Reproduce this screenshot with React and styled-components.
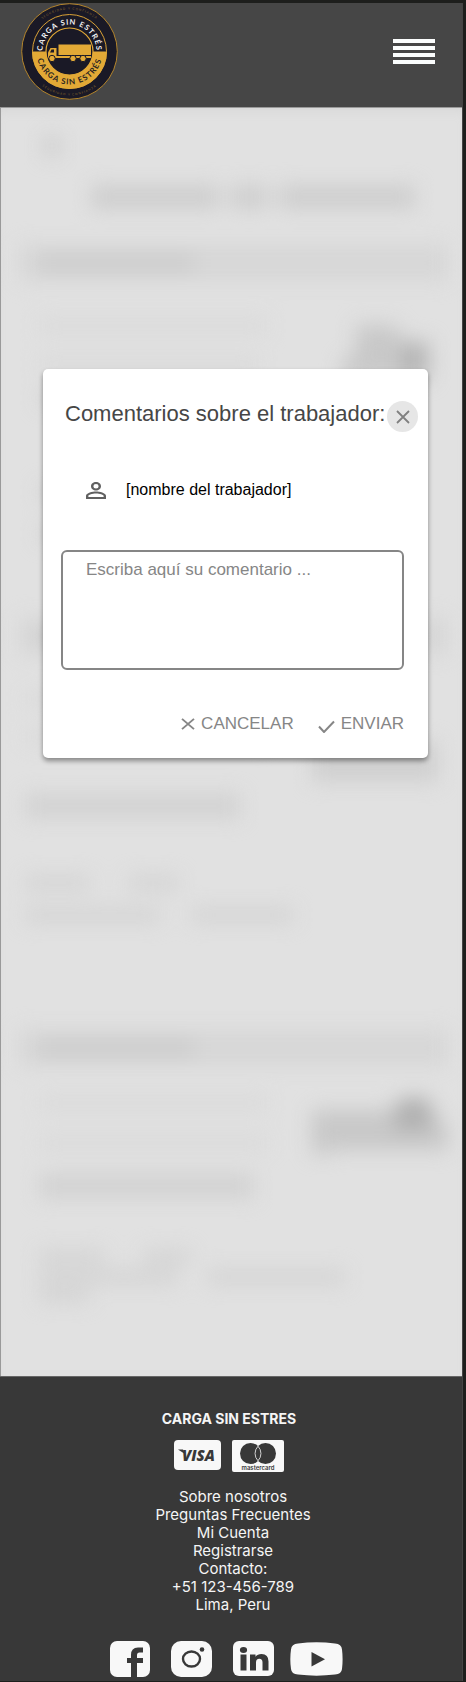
import React from "react";
import styled, { createGlobalStyle } from "styled-components";

const GlobalStyle = createGlobalStyle`
  *, *::before, *::after { box-sizing: border-box; }
  body {
    margin: 0;
    background: #1d1e1c;
    font-family: "Liberation Sans", Arial, sans-serif;
  }
  h1, h2, p, ul { margin: 0; padding: 0; }
  button {
    margin: 0;
    padding: 0;
    border: 0;
    background: none;
    font: inherit;
    cursor: pointer;
  }
  svg { display: block; flex: none; }
`;

const Page = styled.div`
  margin: 3px 3px 1px 0;
  border-right: 1px solid #444;
`;

/* ---------- header ---------- */

const Header = styled.header`
  display: flex;
  align-items: center;
  justify-content: space-between;
  padding: 0 27px 7px 21px;
  background: #464646;
  border-bottom: 1px solid #9a9a9a;
`;

const MenuButton = styled.button`
  display: flex;
  flex-direction: column;
  gap: 3px;
`;

const MenuBar = styled.span`
  width: 42px;
  height: 4px;
  background: #fbfdfd;
`;

function Logo() {
  return (
    <svg width="97" height="97" viewBox="-48.5 -48.5 97 97" role="img" aria-label="Carga sin estrés">
      <defs>
        <path id="arcTop" d="M-27 0A27 27 0 0 1 27 0" />
        <path id="arcBottom" d="M-33 0A33 33 0 0 0 33 0" />
        <path id="rimTop" d="M-42 0A42 42 0 0 1 42 0" />
        <path id="rimBottom" d="M-44 0A44 44 0 0 0 44 0" />
      </defs>
      <circle r="47.800" fill="#1a1926" stroke="#b5862c" strokeWidth="1" />
      <circle r="37" fill="#1a1926" stroke="#d9a136" strokeWidth="1" />
      <path d="M-37.500 0A37.500 37.500 0 0 0 37.500 0Z" fill="#e2a936" />
      <circle r="23.500" fill="#1a1926" stroke="#e2a936" strokeWidth="1.200" />
      <g fontFamily="Lato, sans-serif" textAnchor="middle">
        <text fontSize="7.500" fontWeight="700" fill="#f2f2f4" letterSpacing="1">
          <textPath href="#arcTop" startOffset="50%">CARGA SIN ESTRÉS</textPath>
        </text>
        <text fontSize="8" fontWeight="700" fill="#2a2522" letterSpacing="1">
          <textPath href="#arcBottom" startOffset="50%">CARGA SIN ESTRÉS</textPath>
        </text>
        <text fontSize="3" fill="#8a682c" letterSpacing="1">
          <textPath href="#rimTop" startOffset="50%">SEGURIDAD Y CONFIANZA</textPath>
        </text>
        <text fontSize="3" fill="#8a682c" letterSpacing="1">
          <textPath href="#rimBottom" startOffset="50%">SEGURIDAD Y CONFIANZA</textPath>
        </text>
      </g>
      <g fill="#e2a936">
        <rect x="-11" y="-7" width="32.500" height="10.500" />
        <path d="M-13 -3.500V6H-21.500V1L-19 -3.500Z" />
        <rect x="-21.500" y="4.500" width="43" height="2" />
        <g stroke="#1a1926" strokeWidth="1">
          <circle cx="-17.500" cy="7" r="3.200" />
          <circle cx="3.500" cy="7" r="3.200" />
          <circle cx="13.500" cy="7" r="3.200" />
        </g>
      </g>
      <path d="M-19.500 1L-18 -2H-15.500V1Z" fill="#1a1926" />
    </svg>
  );
}

/* ---------- blurred history list behind the dialog ---------- */

const Main = styled.main`
  display: grid;
  overflow: hidden;
  background: #e1e1e1;
  border-left: 1px solid #999;
  box-shadow: inset 0 8px 12px -6px #d6d6d6;
`;

const Backdrop = styled.div`
  grid-area: 1 / 1;
  display: flex;
  flex-direction: column;
  padding: 28px 14px 74px 18px;
  filter: blur(10px);
`;

const BackMark = styled.span`
  width: 14px;
  height: 20px;
  margin-left: 26px;
  background: #cacaca;
`;

const Band = styled.div`
  display: flex;
  align-items: center;
  height: 36px;
  padding-left: 20px;
  background: #d7d7d7;
`;

const Body = styled.div`
  display: grid;
`;

const Lines = styled.div`
  grid-area: 1 / 1;
  display: flex;
  flex-direction: column;
  padding-left: ${(p) => p.$inset}px;
`;

const Line = styled.div`
  display: flex;
  gap: ${(p) => p.$gap || 12}px;
  margin-top: ${(p) => p.$top || 0}px;
`;

const Bar = styled.span`
  width: ${(p) => p.$w}px;
  height: ${(p) => p.$h || 14}px;
  background: ${(p) => p.$tone || "#d3d3d3"};
`;

const Thumb = styled.svg`
  grid-area: 1 / 1;
  justify-self: end;
  margin-top: ${(p) => p.$top}px;
`;

const FAINT = "#dadada";
const SOFT = "#d2d2d2";
const STRONG = "#c9c9c9";

function BlurredHistory() {
  return (
    <Backdrop aria-hidden="true">
      <BackMark />
      <Lines $inset={72}>
        <Line $top={30}>
          <Bar $w={128} $h={22} $tone="#cdcdcd" />
          <Bar $w={36} $h={22} $tone="#cdcdcd" />
          <Bar $w={136} $h={22} $tone="#cdcdcd" />
        </Line>
      </Lines>
      <Line $top={37} />
      <Band><Bar $w={155} $tone={STRONG} /></Band>
      <Body>
        <Lines $inset={20}>
          <Line $top={38}><Bar $w={228} $tone={FAINT} /></Line>
          <Line $top={24}><Bar $w={220} $tone={FAINT} /></Line>
          <Line $top={20}><Bar $w={220} $tone={SOFT} /></Line>
          <Line $top={80}><Bar $w={160} $tone={SOFT} /></Line>
          <Line $top={28}><Bar $w={200} $tone={SOFT} /></Line>
          <Line $top={77} />
        </Lines>
        <Thumb $top={42} width="116" height="56" viewBox="0 0 116 56">
          <path d="M24 2H62L72 18H98V56H10V40L24 28Z" fill="#c8c8c8" />
          <path d="M70 20H94V56H70Z" fill="#b4b4b4" />
        </Thumb>
      </Body>
      <Band><Bar $w={155} $tone={STRONG} /></Band>
      <Body>
        <Lines $inset={6}>
          <Line $top={38}><Bar $w={240} $tone={FAINT} /></Line>
          <Line $top={24}><Bar $w={240} $tone={FAINT} /></Line>
          <Line $top={50}><Bar $w={215} $h={24} $tone={SOFT} /></Line>
          <Line $top={58} $gap={38}><Bar $w={65} /><Bar $w={50} /></Line>
          <Line $top={18} $gap={32}><Bar $w={135} /><Bar $w={102} /></Line>
          <Line $top={108} />
        </Lines>
        <Thumb $top={84} width="140" height="48" viewBox="0 0 140 48">
          <path d="M4 4H130V44H4Z" fill="#d0d0d0" />
        </Thumb>
      </Body>
      <Band><Bar $w={155} $tone={STRONG} /></Band>
      <Body>
        <Lines $inset={20}>
          <Line $top={30}><Bar $w={228} $tone={FAINT} /></Line>
          <Line $top={26}><Bar $w={228} $tone={FAINT} /></Line>
          <Line $top={24}><Bar $w={215} $h={24} $tone={SOFT} /></Line>
          <Line $top={52} $gap={40}><Bar $w={65} /><Bar $w={46} /></Line>
          <Line $top={6} $gap={30}><Bar $w={138} /><Bar $w={138} /></Line>
          <Line $top={4}><Bar $w={50} /></Line>
        </Lines>
        <Thumb $top={30} width="140" height="60" viewBox="0 0 140 60">
          <path d="M4 14H80L92 4H122L130 22L140 32V54H22V58H4Z" fill="#c8c8c8" />
          <path d="M92 2H120L124 34H84Z" fill="#b0b0b0" />
        </Thumb>
      </Body>
    </Backdrop>
  );
}

/* ---------- dialog ---------- */

const Dialog = styled.section`
  grid-area: 1 / 1;
  align-self: start;
  z-index: 1;
  margin: 261px 34px 0 42px;
  padding: 32px 24px 23px 18px;
  background: #fff;
  border-radius: 5px;
  box-shadow: 0 3px 5px rgba(0, 0, 0, 0.4);
`;

const DialogHead = styled.div`
  display: flex;
  align-items: flex-start;
  justify-content: space-between;
  margin-right: -14px;
  padding-left: 4px;
`;

const Title = styled.h1`
  color: #464646;
  font-size: 22px;
  font-weight: 400;
  line-height: 26px;
  white-space: nowrap;
`;

const CloseButton = styled.button`
  display: grid;
  place-items: center;
  width: 31px;
  height: 31px;
  flex: none;
  border-radius: 50%;
  background: #e6e6e6;
  color: #808080;
`;

const Worker = styled.div`
  display: flex;
  align-items: center;
  gap: 20px;
  margin: 48px 0 50px;
  padding-left: 25px;
  color: #000;
  font-size: 16px;
  line-height: 20px;
`;

const Comment = styled.textarea`
  display: block;
  width: 100%;
  height: 120px;
  padding: 8px 23px;
  border: 2px solid #868686;
  border-radius: 6px;
  background: #fff;
  color: #464646;
  font: 17px/20px "Liberation Sans", Arial, sans-serif;
  resize: none;
  &::placeholder { color: #868686; opacity: 1; }
`;

const Actions = styled.div`
  display: flex;
  justify-content: flex-end;
  gap: 24px;
  margin-top: 43px;
`;

const ActionButton = styled.button`
  display: flex;
  align-items: center;
  gap: 6px;
  color: #868686;
  font-size: 17px;
  line-height: 22px;
`;

function Cross({ width, height }) {
  return (
    <svg width={width} height={height} viewBox="0 0 14 14" preserveAspectRatio="none" aria-hidden="true">
      <path d="M1 1L13 13M13 1L1 13" stroke="currentColor" strokeWidth="1.800" fill="none" />
    </svg>
  );
}

function Check() {
  return (
    <svg width="17" height="18" viewBox="0 0 17 18" aria-hidden="true">
      <path d="M1 11.500L6 17L16 6.500" stroke="currentColor" strokeWidth="2" fill="none" />
    </svg>
  );
}

function Person() {
  return (
    <svg width="20" height="17" viewBox="4 4 16 16" preserveAspectRatio="none" fill="#606060" aria-hidden="true">
      <path d="M12 5.900a2.100 2.100 0 1 1 0 4.200 2.100 2.100 0 0 1 0-4.200m0 9c2.970 0 6.100 1.460 6.100 2.100v1.100H5.900V17c0-.64 3.130-2.100 6.100-2.100M12 4C9.790 4 8 5.790 8 8s1.790 4 4 4 4-1.790 4-4-1.790-4-4-4zm0 9c-2.670 0-8 1.340-8 4v3h16v-3c0-2.660-5.330-4-8-4z" />
    </svg>
  );
}

/* ---------- footer ---------- */

const Footer = styled.footer`
  display: flex;
  flex-direction: column;
  align-items: center;
  padding: 33px 0 4px;
  background: #383838;
  border-top: 1px solid #666;
  color: #f5f5f5;
  font-family: Inter, sans-serif;
  font-size: 15px;
  line-height: 18px;
`;

const Brand = styled.div`
  display: flex;
  flex-direction: column;
  align-items: center;
  gap: 12px;
  padding-right: 4px;
`;

const BrandName = styled.h2`
  font-size: 14px;
  font-weight: 700;
  line-height: 18px;
`;

const Cards = styled.div`
  display: flex;
  gap: 11px;
`;

const Links = styled.ul`
  margin-top: 16px;
  padding-left: 4px;
  list-style: none;
  text-align: center;
`;

const FooterLink = styled.a`
  color: inherit;
  text-decoration: none;
`;

const Socials = styled.nav`
  display: flex;
  align-items: center;
  gap: 16px;
  margin-top: 27px;
  padding-right: 10px;
`;

const SquareIcons = styled.div`
  display: flex;
  gap: 21px;
`;

const WHITE = "#f8f8f8";
const DARK = "#383838";

function Visa() {
  return (
    <svg width="47" height="30" viewBox="0 0 47 30" role="img" aria-label="Visa">
      <rect width="47" height="30" rx="4" fill={WHITE} />
      <path d="M4 9.500H9L11 14Z" fill={DARK} />
      <text x="24.500" y="20.500" textAnchor="middle" fontFamily="Open Sans, sans-serif" fontSize="15" fontWeight="800" fontStyle="italic" fill={DARK}>VISA</text>
    </svg>
  );
}

function Mastercard() {
  return (
    <svg width="52" height="32" viewBox="0 0 52 32" role="img" aria-label="Mastercard">
      <rect width="52" height="32" rx="2" fill={WHITE} />
      <circle cx="18.500" cy="13.500" r="10.500" fill={DARK} />
      <circle cx="33.500" cy="13.500" r="10.500" fill={DARK} />
      <path d="M26 6.200a10.500 10.500 0 0 1 0 14.600a10.500 10.500 0 0 1 0-14.600Z" fill={DARK} stroke={WHITE} strokeWidth="0.800" />
      <text x="26" y="29.500" textAnchor="middle" fontFamily="Inter, sans-serif" fontSize="6" fontWeight="600" fill={DARK}>mastercard</text>
    </svg>
  );
}

function Facebook() {
  return (
    <svg width="40" height="36" viewBox="0 0 40 36" aria-hidden="true">
      <rect width="40" height="36" rx="7" fill={WHITE} />
      <path d="M21 36V22H17V17H21V14Q21 6.500 28 6.500H33V11.500H29.500Q27 11.500 27 14V17H33V22H27V36Z" fill={DARK} />
    </svg>
  );
}

function Instagram() {
  return (
    <svg width="41" height="36" viewBox="0 0 41 36" aria-hidden="true">
      <rect width="41" height="36" rx="10" fill={WHITE} />
      <ellipse cx="20.500" cy="18" rx="8.500" ry="7.500" fill="none" stroke={DARK} strokeWidth="2.400" />
      <circle cx="31" cy="8.500" r="2.300" fill={DARK} />
    </svg>
  );
}

function LinkedIn() {
  return (
    <svg width="41" height="36" viewBox="0 0 41 36" aria-hidden="true">
      <rect width="41" height="35" rx="6" fill={WHITE} />
      <g fill={DARK}>
        <ellipse cx="10.500" cy="9" rx="3.600" ry="3" />
        <rect x="7.500" y="13.500" width="6" height="16" />
        <path d="M17 13.500H22.500V15.800Q24.500 13 28.500 13Q35.500 13 35.500 20.500V29.500H29.500V21.500Q29.500 17.800 26.300 17.800Q23 17.800 23 21.500V29.500H17Z" />
      </g>
    </svg>
  );
}

function YouTube() {
  return (
    <svg width="53" height="34" viewBox="0 0 53 34" aria-hidden="true">
      <path d="M8 1.500Q26.500 -0.800 45 1.500Q51.500 2 52 7.500Q53.200 17 52 27Q51.500 32 45 32.500Q26.500 34.800 8 32.500Q1.500 32 1 27Q-0.400 17 1 7.500Q1.500 2 8 1.500Z" fill={WHITE} />
      <path d="M21.500 10V24.500L35 17.200Z" fill={DARK} />
    </svg>
  );
}

const LINKS = ["Sobre nosotros", "Preguntas Frecuentes", "Mi Cuenta", "Registrarse"];

export default function App() {
  return (
    <>
      <GlobalStyle />
      <Page>
        <Header>
          <Logo />
          <MenuButton type="button" aria-label="Menú">
            <MenuBar />
            <MenuBar />
            <MenuBar />
            <MenuBar />
          </MenuButton>
        </Header>

        <Main>
          <BlurredHistory />
          <Dialog role="dialog" aria-labelledby="dialog-title">
            <DialogHead>
              <Title id="dialog-title">Comentarios sobre el trabajador:</Title>
              <CloseButton type="button" aria-label="Cerrar">
                <Cross width={14} height={14} />
              </CloseButton>
            </DialogHead>
            <Worker>
              <Person />
              <p>[nombre del trabajador]</p>
            </Worker>
            <Comment aria-label="Comentario" placeholder="Escriba aquí su comentario ..." />
            <Actions>
              <ActionButton type="button">
                <Cross width={14} height={12} />
                CANCELAR
              </ActionButton>
              <ActionButton type="button">
                <Check />
                ENVIAR
              </ActionButton>
            </Actions>
          </Dialog>
        </Main>

        <Footer>
          <Brand>
            <BrandName>CARGA SIN ESTRES</BrandName>
            <Cards>
              <Visa />
              <Mastercard />
            </Cards>
          </Brand>
          <Links>
            {LINKS.map((label) => (
              <li key={label}><FooterLink href="#">{label}</FooterLink></li>
            ))}
            <li>Contacto:</li>
            <li><FooterLink href="tel:+51123456789">+51 123-456-789</FooterLink></li>
            <li>Lima, Peru</li>
          </Links>
          <Socials>
            <SquareIcons>
              <FooterLink href="#" aria-label="Facebook"><Facebook /></FooterLink>
              <FooterLink href="#" aria-label="Instagram"><Instagram /></FooterLink>
              <FooterLink href="#" aria-label="LinkedIn"><LinkedIn /></FooterLink>
            </SquareIcons>
            <FooterLink href="#" aria-label="YouTube"><YouTube /></FooterLink>
          </Socials>
        </Footer>
      </Page>
    </>
  );
}
